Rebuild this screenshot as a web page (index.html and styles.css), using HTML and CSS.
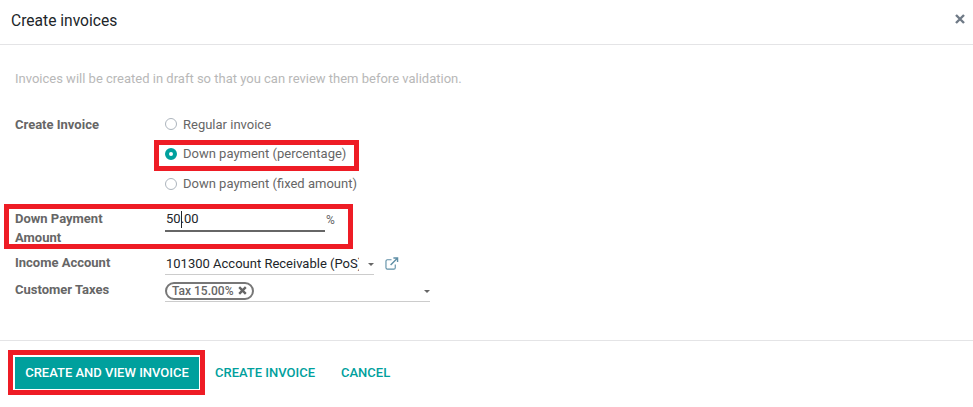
FILE: index.html
```html
<!DOCTYPE html>
<html lang="en">
<head>
<meta charset="utf-8">
<title>Create invoices</title>
<link rel="stylesheet" href="styles.css">
</head>
<body>
<div class="dialog">
  <header class="head">
    <h1 class="title">Create invoices</h1>
    <svg class="close" width="10" height="10" viewBox="0 0 10 10"><path d="M1 1l8 8M9 1l-8 8" stroke="#6f7a86" stroke-width="2.400"/></svg>
  </header>
  <main class="body">
    <p class="intro">Invoices will be created in draft so that you can review them before validation.</p>
    <div class="form">
      <div class="label l-method">Create Invoice</div>
      <div class="radios">
        <div class="radio"><span class="dot"></span>Regular invoice</div>
        <div class="radio"><span class="dot on"></span>Down payment (percentage)</div>
        <div class="radio"><span class="dot"></span>Down payment (fixed amount)</div>
      </div>
      <div class="label l-amount">Down Payment Amount</div>
      <div class="amount">
        <div class="input"><span>50</span><span class="cursor"></span><span>.00</span></div>
        <span class="pct">%</span>
      </div>
      <div class="label l-account">Income Account</div>
      <div class="account">
        <div class="select s-account"><span class="clip">101300 Account Receivable (PoS)</span><span class="caret"></span></div>
        <svg class="ext" width="14" height="13" viewBox="0 0 15 14" fill="none" stroke="#5f8fa6" stroke-width="1.200"><path d="M11 8v3.500a1.500 1.500 0 0 1-1.500 1.500h-7A1.500 1.500 0 0 1 1 11.500v-7A1.500 1.500 0 0 1 2.500 3H7"/><path d="M6 8.500L13 1.500M9 1h4.500v4.500" stroke-width="1.500"/></svg>
      </div>
      <div class="label l-taxes">Customer Taxes</div>
      <div class="select s-taxes">
        <span class="tag">Tax 15.00%<svg class="tag-x" width="9" height="9" viewBox="0 0 9 9"><path d="M1.200 1.200l6.600 6.600M7.800 1.200l-6.600 6.600" stroke="#666" stroke-width="2.400"/></svg></span>
        <span class="caret"></span>
      </div>
    </div>
  </main>
  <footer class="foot">
    <button class="btn primary">CREATE AND VIEW INVOICE</button>
    <button class="btn link">CREATE INVOICE</button>
    <button class="btn link">CANCEL</button>
  </footer>
  <div class="mark m-radio"></div>
  <div class="mark m-amount"></div>
  <div class="mark m-button"></div>
</div>
</body>
</html>
```
FILE: styles.css
```css
* { box-sizing: border-box; }
html, body { margin: 0; padding: 0; }
body { background: #fff; font-family: Roboto, "Liberation Sans", sans-serif; font-size: 13px; color: #666; }
.dialog { position: relative; width: 973px; height: 407px; overflow: hidden; }
.head { height: 45px; border-bottom: 1px solid #e4e4e6; display: flex; align-items: center; justify-content: space-between; padding: 0 8px 7px 11px; }
.title { margin: 0 0 -4px; font-size: 15.600px; font-weight: 400; color: #212529; }
.body { height: 295px; padding: 25px 15px 0; }
.intro { margin: 0; height: 18px; line-height: 18px; color: #b8b8b8; }
.form { display: grid; grid-template-columns: 150px 1fr; margin-top: 27px; }
.label { font-weight: 700; line-height: 19px; color: #666; }
.l-method { line-height: 18px; padding-top: 1px; }
.radios { display: flex; flex-direction: column; }
.radio { display: flex; align-items: center; height: 18px; margin-bottom: 12px; color: #666; }
.radio:first-child { margin-bottom: 11.500px; }
.radio:last-child { margin-bottom: 0; }
.dot { width: 12px; height: 12px; border-radius: 50%; border: 1px solid #adb5bd; margin-right: 6px; background: #fff; flex: none; }
.dot.on { border: 4px solid #00a09d; background: #fff; }
.l-amount { margin-top: 16px; width: 110px; }
.amount { margin-top: 16px; display: flex; align-items: flex-start; height: 40px; }
.input { width: 160px; height: 23px; border-bottom: 2px solid #666; color: #212529; padding: 1px 1px 0; line-height: 18px; display: flex; }
.cursor { width: 1px; height: 17px; margin-top: 1px; background: #212529; }
.input span:last-child { margin-left: -1px; }
.pct { margin: 3px 0 0 1px; font-size: 12px; line-height: 16px; }
.l-account { margin-top: 5px; line-height: 18px; }
.account { margin-top: 5px; display: flex; align-items: flex-start; }
.select { position: relative; display: flex; align-items: center; border-bottom: 1px solid #ccc; color: #212529; }
.s-account { width: 209px; height: 21px; padding: 0 0 1px 1px; }
.clip { display: block; width: 193px; overflow: hidden; white-space: nowrap; }
.caret { position: absolute; right: 0; top: 9px; width: 0; height: 0; border-left: 3.500px solid transparent; border-right: 3.500px solid transparent; border-top: 3.500px solid #666; }
.ext { margin: 3px 0 0 11px; }
.l-taxes { margin-top: 6px; line-height: 18px; }
.s-taxes { width: 265px; height: 21px; margin-top: 6px; }
.tag { display: inline-flex; align-items: center; height: 18px; border: 2px solid #777; border-radius: 9px; padding: 0 5px 0 5px; color: #666; font-weight: 500; font-size: 12px; }
.tag-x { margin-left: 5px; }
.foot { height: 67px; border-top: 1px solid #e4e4e6; display: flex; align-items: flex-start; padding: 16px 0 0 15px; }
.btn { border: 0; background: none; font-family: inherit; font-size: 13px; font-weight: 500; height: 32px; padding: 0 12px 2px; margin: 0; }
.primary { background: #00a09d; color: #fff; width: 184px; padding: 0 0 2px; }
.link { color: #00a09d; padding: 0 16px 2px 16px; margin-right: -6px; }
.mark { position: absolute; border: 5px solid #ee1c25; }
.m-radio { left: 154px; top: 140px; width: 205px; height: 31px; }
.m-amount { left: 4px; top: 204px; width: 349px; height: 45px; }
.m-button { left: 8px; top: 350px; width: 197px; height: 45px; }
```
